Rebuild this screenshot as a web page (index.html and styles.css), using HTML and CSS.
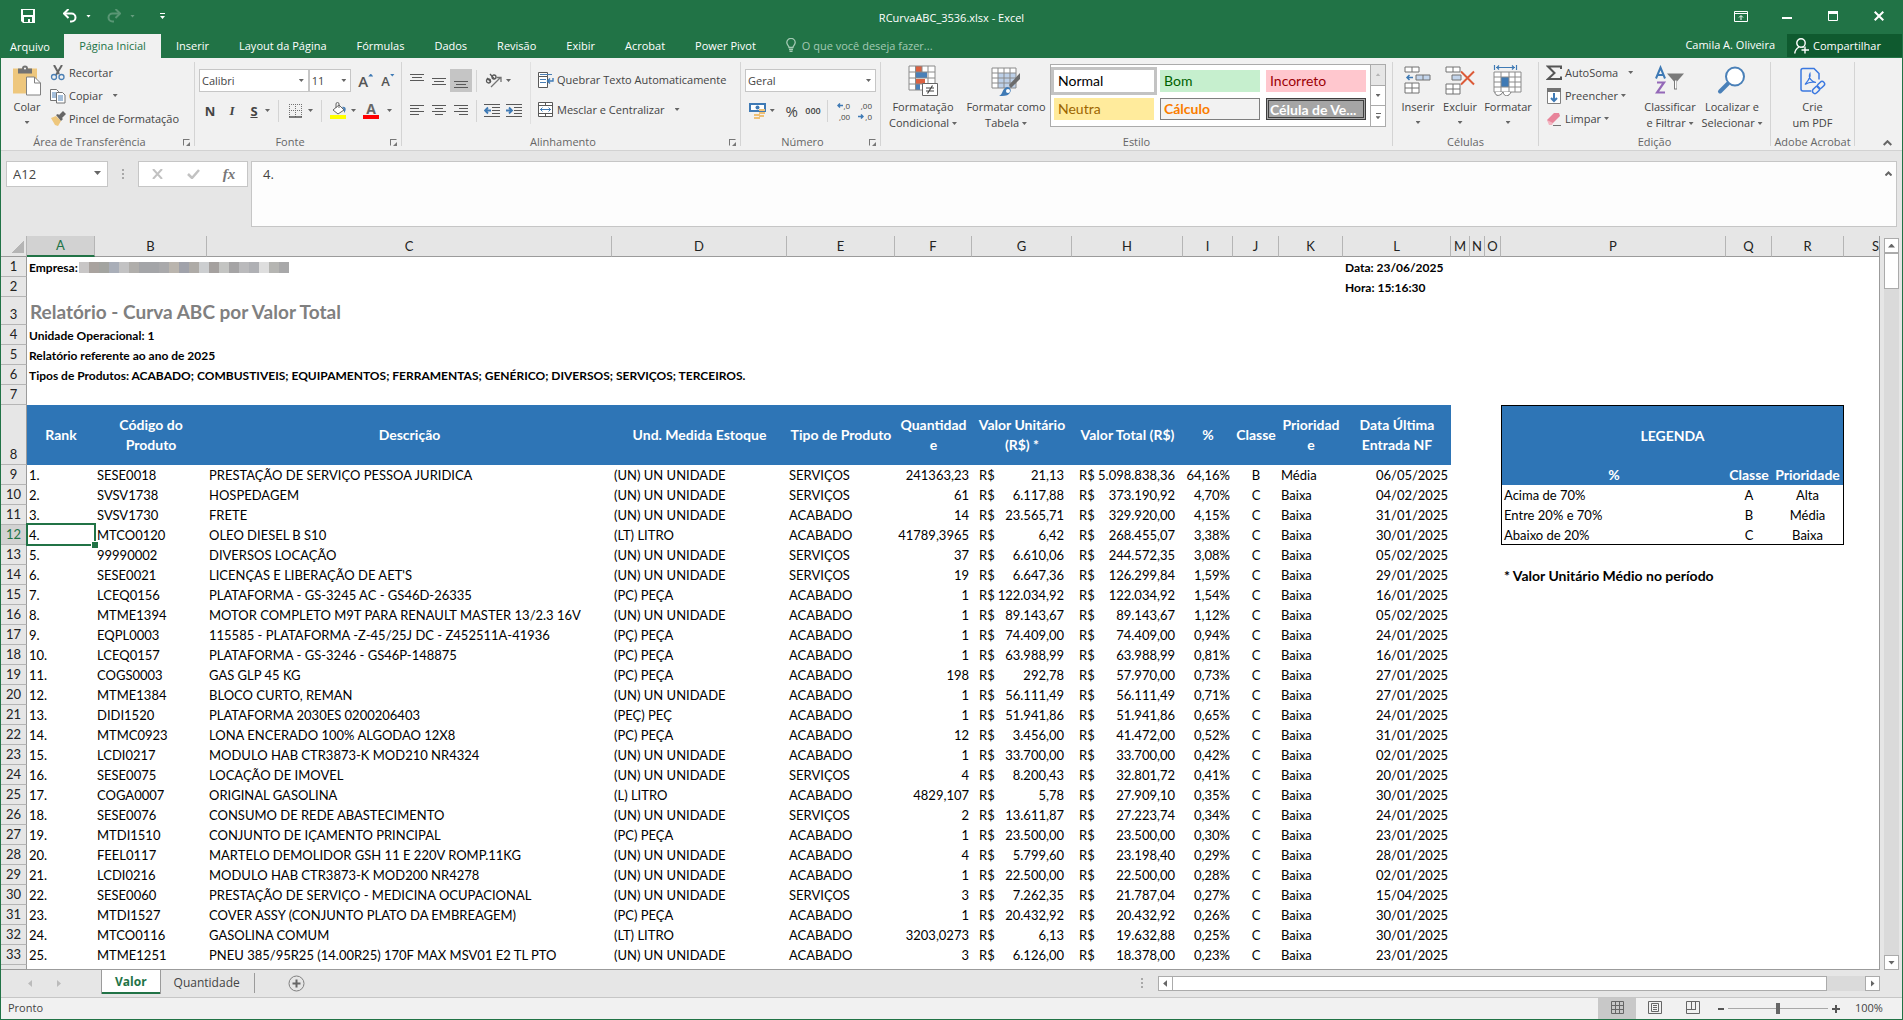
FILE: index.html
```html
<!DOCTYPE html>
<html lang="pt-BR">
<head>
    <meta charset="UTF-8">
    <meta name="viewport" content="width=device-width, initial-scale=1.0">
    <title>RCurvaABC_3536.xlsx - Excel</title>
    <link rel="stylesheet" href="styles.css">
</head>
<body>
    <header class="titlebar">
        <div class="quick">
            <button class="save" aria-label="Salvar"><svg width="14" height="14" viewBox="0 0 14 14"><path d="M0 0h14v14H2L0 12z" fill="#fff"/><path d="M2 1h10v5H2zM3 8h8v5H9v-3H7v3H3z" fill="#217346"/></svg></button>
            <button aria-label="Desfazer"><svg width="14" height="14" viewBox="0 0 14 14"><path d="M1 4.500h7.500a4 4 0 0 1 0 8H7" fill="none" stroke="#fff" stroke-width="2"/><path d="M5.500 0L1 4.500 5.500 9" fill="none" stroke="#fff" stroke-width="2"/></svg></button>
            <i class="caret light"></i>
            <button class="redo" aria-label="Refazer"><svg width="14" height="14" viewBox="0 0 14 14"><path d="M13 4.500H5.500a4 4 0 0 0 0 8H7" fill="none" stroke="#fff" stroke-width="2"/><path d="M8.500 0L13 4.500 8.500 9" fill="none" stroke="#fff" stroke-width="2"/></svg></button>
            <i class="caret light dim"></i>
            <button class="more" aria-label="Personalizar"><svg width="5" height="7" viewBox="0 0 5 7"><path d="M0 0h5v1H0zM0 3h5L2.500 6z" fill="#fff"/></svg></button>
        </div>
        <h1>RCurvaABC_3536.xlsx - Excel</h1>
        <div class="window-buttons">
            <button aria-label="Opções da faixa"><svg width="14" height="11" viewBox="0 0 14 11"><path d="M.5.5h13v10H.5zM1 2.500h12M7 9V5M5 6.500L7 4.500l2 2" fill="none" stroke="#fff"/></svg></button>
            <button aria-label="Minimizar"><svg width="10" height="10" viewBox="0 0 10 10"><path d="M0 6h10v2H0z" fill="#fff"/></svg></button>
            <button aria-label="Restaurar"><svg width="10" height="10" viewBox="0 0 10 10"><path d="M.5.5h9v9h-9z" fill="none" stroke="#fff"/><path d="M0 0h10v3H0z" fill="#fff"/></svg></button>
            <button aria-label="Fechar"><svg width="10" height="10" viewBox="0 0 10 10"><path d="M.7.7l8.600 8.600M9.300.7L.7 9.300" stroke="#fff" stroke-width="2"/></svg></button>
        </div>
    </header>

    <nav class="tabs">
        <button class="file">Arquivo</button>
        <button class="active">Página Inicial</button>
        <button>Inserir</button>
        <button>Layout da Página</button>
        <button>Fórmulas</button>
        <button>Dados</button>
        <button>Revisão</button>
        <button>Exibir</button>
        <button>Acrobat</button>
        <button>Power Pivot</button>
        <button class="tellme"><svg width="10" height="14" viewBox="0 0 10 14"><path d="M3 9.500C3 7.500.8 7 .8 4.600a4.200 4.200 0 0 1 8.400 0C9.200 7 7 7.500 7 9.500zM3 11.500h4M3.500 13.300h3" fill="none" stroke="#a3c9b3" stroke-width="1.300"/></svg>O que você deseja fazer...</button>
        <span class="user">Camila A. Oliveira</span>
        <button class="share"><svg width="15" height="16" viewBox="0 0 15 16"><circle cx="7" cy="5" r="4.200" fill="none" stroke="#fff" stroke-width="1.400"/><path d="M.8 15.500c0-3.500 2-5 4.200-6.500M8.500 9l1 .8M11 8.500v7M7.500 12H15" fill="none" stroke="#fff" stroke-width="1.400"/></svg>Compartilhar</button>
    </nav>

    <section class="ribbon">
        <div class="group clipboard">
            <div class="tools">
                <button class="big paste">
                    <svg width="30" height="30" viewBox="0 0 30 30"><path d="M1 3h24v25H1z" fill="#eec77d"/><path d="M6 3h4a3 3 0 0 1 6 0h4v5H6z" fill="#737373"/><circle cx="13" cy="3" r="1" fill="#fff"/><path d="M14.500 11.500h8l6 6v12h-14z" fill="#fff" stroke="#808080"/><path d="M22.500 11.500v6h6" fill="none" stroke="#808080"/></svg>
                    <span>Colar</span><i class="caret"></i>
                </button>
                <div class="stack">
                    <button class="small"><svg width="16" height="16" viewBox="0 0 16 16"><path d="M4 0l5 9M12 0L6 10" stroke="#666" stroke-width="2"/><circle cx="4" cy="12" r="2.500" fill="none" stroke="#4a7fb5" stroke-width="1.300"/><circle cx="11.500" cy="12" r="2.500" fill="none" stroke="#4a7fb5" stroke-width="1.300"/></svg>Recortar</button>
                    <button class="small"><svg width="16" height="16" viewBox="0 0 16 16"><path d="M.5 1.500h6l2 2v9h-8z" fill="#fff" stroke="#737373"/><path d="M2 5h4M2 7h4M2 9h4" stroke="#4a7fb5"/><path d="M6.500 4.500h6l2.500 2.500v8H6.500z" fill="#fff" stroke="#737373"/><path d="M8 8h5M8 10h5M8 12h5" stroke="#4a7fb5"/></svg>Copiar<i class="caret far"></i></button>
                    <button class="small"><svg width="16" height="16" viewBox="0 0 16 16"><path d="M1 7l5-2 5 5-3 5-3-1z" fill="#eec77d"/><path d="M6 4l2-1 5 5-2 2zM9 4l4-4 3 3-4 4z" fill="#666"/></svg>Pincel de Formatação</button>
                </div>
            </div>
            <div class="label">Área de Transferência<i class="launch"></i></div>
        </div>

        <div class="group font">
            <div class="tools rows">
                <div class="line">
                    <label class="combo family"><select aria-label="Fonte"><option>Calibri</option></select><i class="caret"></i></label>
                    <label class="combo size"><select aria-label="Tamanho"><option>11</option></select><i class="caret"></i></label>
                    <button class="grow" aria-label="Aumentar fonte">A<i class="tri up"></i></button>
                    <button class="grow shrink" aria-label="Diminuir fonte">A<i class="tri down"></i></button>
                </div>
                <div class="line">
                    <button class="glyph bold">N</button>
                    <button class="glyph italic">I</button>
                    <button class="glyph under">S</button>
                    <i class="caret"></i>
                    <span class="sep"></span>
                    <button class="tool" aria-label="Bordas"><svg width="14" height="14" viewBox="0 0 14 14"><path d="M.5 0v13M6.500 0v13M12.500 0v13M0 .5h13M0 6.500h13" stroke="#737373" stroke-dasharray="1 1" fill="none"/><path d="M0 13h13" stroke="#555" stroke-width="1.500"/></svg></button>
                    <i class="caret"></i>
                    <span class="sep"></span>
                    <button class="tool" aria-label="Preenchimento"><svg width="17" height="17" viewBox="0 0 17 17"><path d="M3 8l6-5 5 5-6 4z" fill="#fff" stroke="#666"/><path d="M6 6V2a1.500 1.500 0 0 1 3 0v4" fill="none" stroke="#666"/><path d="M12 5c4-1 5 3 2 6 0-3 0-4-2-6" fill="#4a7fb5"/><path d="M0 13h16v4H0z" fill="#ff0"/></svg></button>
                    <i class="caret"></i>
                    <button class="tool fontcolor" aria-label="Cor da fonte">A</button>
                    <i class="caret"></i>
                </div>
            </div>
            <div class="label">Fonte<i class="launch"></i></div>
        </div>

        <div class="group align">
            <div class="tools">
                <div class="rows">
                    <div class="line">
                        <button class="cell22" aria-label="Em cima"><svg width="14" height="14" viewBox="0 0 14 14"><path d="M0 .5h14M2 3.500h10M0 6.500h14" stroke="#595959"/></svg></button>
                        <button class="cell22" aria-label="No meio"><svg width="14" height="14" viewBox="0 0 14 14"><path d="M0 4.500h14M2 7.500h10M0 10.500h14" stroke="#595959"/></svg></button>
                        <button class="cell22 pressed" aria-label="Embaixo"><svg width="14" height="14" viewBox="0 0 14 14"><path d="M0 7.500h14M2 10.500h10M0 13.500h14" stroke="#595959"/></svg></button>
                        <span class="sep"></span>
                        <button class="orient" aria-label="Orientação"><svg width="17" height="15" viewBox="0 0 17 15"><g fill="none" stroke="#595959" stroke-width="1.300"><circle cx="3.500" cy="8" r="2"/><path d="M2 5l4 4M5 1l4.500 5"/><circle cx="9" cy="4" r="2"/></g><path d="M6 14l9-9M11.500 4.500H16V9" fill="none" stroke="#737373" stroke-width="1.300"/></svg></button>
                        <i class="caret"></i>
                    </div>
                    <div class="line">
                        <button class="cell22" aria-label="Esquerda"><svg width="14" height="11" viewBox="0 0 14 11"><path d="M0 .5h14M0 3.500h9M0 6.500h14M0 9.500h9" stroke="#595959"/></svg></button>
                        <button class="cell22" aria-label="Centro"><svg width="14" height="11" viewBox="0 0 14 11"><path d="M0 .5h14M3 3.500h8M0 6.500h14M3 9.500h8" stroke="#595959"/></svg></button>
                        <button class="cell22" aria-label="Direita"><svg width="14" height="11" viewBox="0 0 14 11"><path d="M0 .5h14M5 3.500h9M0 6.500h14M5 9.500h9" stroke="#595959"/></svg></button>
                        <span class="sep"></span>
                        <button class="cell22" aria-label="Diminuir recuo"><svg width="16" height="14" viewBox="0 0 16 14"><path d="M0 .5h16M8 3.500h8M8 6.500h8M8 9.500h8M0 12.500h16" stroke="#595959"/><path d="M7 6.500H1M4 3.500l-3 3 3 3" fill="none" stroke="#3f7ab5" stroke-width="1.800"/></svg></button>
                        <button class="cell22" aria-label="Aumentar recuo"><svg width="16" height="14" viewBox="0 0 16 14"><path d="M0 .5h16M8 3.500h8M8 6.500h8M8 9.500h8M0 12.500h16" stroke="#595959"/><path d="M0 6.500h6M3 3.500l3 3-3 3" fill="none" stroke="#3f7ab5" stroke-width="1.800"/></svg></button>
                    </div>
                </div>
                <div class="rows wraps">
                    <button class="small line"><svg width="16" height="16" viewBox="0 0 16 16"><path d="M.5.5h9v4h-9zM.5 4.500h9v11h-9z" fill="#fff" stroke="#595959"/><path d="M2 2.500h12M2 7.500h6M2 10.500h6" stroke="#4a7fb5"/><path d="M15 6v3h-5M12 6.500L9.500 9l2.500 2.500" fill="none" stroke="#3f7ab5" stroke-width="1.400"/></svg>Quebrar Texto Automaticamente</button>
                    <button class="small line"><svg width="16" height="15" viewBox="0 0 16 15"><path d="M.5.5h14v14H.5zM.5 3.500h14M.5 11.500h14M7.500 0v3M7.500 12v3" fill="#fff" stroke="#595959"/><path d="M2 7.500h11M4.500 5.500l-2 2 2 2M10.500 5.500l2 2-2 2" fill="none" stroke="#3f7ab5"/></svg>Mesclar e Centralizar<i class="caret far"></i></button>
                </div>
            </div>
            <div class="label">Alinhamento<i class="launch"></i></div>
        </div>

        <div class="group number">
            <div class="tools rows">
                <div class="line">
                    <label class="combo format"><select aria-label="Formato"><option>Geral</option></select><i class="caret"></i></label>
                </div>
                <div class="line">
                    <button class="tool" aria-label="Moeda"><svg width="17" height="17" viewBox="0 0 17 17"><path d="M1 2h15v7H1z" fill="#fff" stroke="#3f7ab5" stroke-width="2"/><circle cx="8.500" cy="5.500" r="2" fill="#3f7ab5"/><path d="M10 7h6v2h-6zM10 10h6v2h-6zM5 12h6v2H5zM5 15h6v2H5zM10 13h5v2h-5z" fill="#eec077"/></svg></button>
                    <i class="caret"></i>
                    <button class="glyph percent">%</button>
                    <button class="glyph thousand">000</button>
                    <span class="sep"></span>
                    <button class="decimals"><span><svg width="6" height="5" viewBox="0 0 6 5"><path d="M6 2.500H1M3 .5l-2 2 2 2" fill="none" stroke="#3f7ab5" stroke-width="1.500"/></svg>,0</span><span>,00</span></button>
                    <button class="decimals"><span>,00</span><span><svg width="6" height="5" viewBox="0 0 6 5"><path d="M0 2.500h5M3 .5l2 2-2 2" fill="none" stroke="#3f7ab5" stroke-width="1.500"/></svg>,0</span></button>
                </div>
            </div>
            <div class="label">Número<i class="launch"></i></div>
        </div>

        <div class="group styles">
            <div class="tools">
                <button class="big cond">
                    <svg width="30" height="31" viewBox="0 0 30 31"><path d="M1 1h26v24H1z" fill="#fff"/><path d="M8 1h6v6H8zM8 14h9v5H8z" fill="#dc6141"/><path d="M8 7h11v6H8zM8 19h4v6H8z" fill="#4a80b8"/><path d="M1 1h26v24H1zM1 7h26M1 13h26M1 19h26M7.500 1v24M14 1v6M20 1v24" fill="none" stroke="#8a8a8a"/><path d="M14.500 18.500h15v12h-15z" fill="#fff" stroke="#666"/><path d="M18 23h8M18 26h8M24.500 20.500l-5 8" stroke="#444" stroke-width="1.200"/></svg>
                    <span>Formatação<br>Condicional <i class="caret"></i></span>
                </button>
                <button class="big astable">
                    <svg width="30" height="31" viewBox="0 0 30 31"><path d="M1 3h24v20H1z" fill="#fff"/><path d="M7 8h18v15H7z" fill="#bdd0e8"/><path d="M1 3h24v20H1zM1 8h24M1 13h24M1 18h24M7 3v20M13 3v20M19 3v20" fill="none" stroke="#8a8a8a"/><path d="M29 8v6l-9 9-2-3z" fill="#6b6b6b"/><path d="M8 31c4-1 3-8 8-9 4 0 5 4 2 7-2 2-6 2-10 2" fill="#3f7ab5"/><circle cx="17" cy="26" r="2" fill="#fff"/></svg>
                    <span>Formatar como<br>Tabela <i class="caret"></i></span>
                </button>
                <div class="gallery">
                    <div class="swatches">
                        <button class="normal">Normal</button>
                        <button class="good">Bom</button>
                        <button class="bad">Incorreto</button>
                        <button class="neutral">Neutra</button>
                        <button class="calc">Cálculo</button>
                        <button class="check">Célula de Ve...</button>
                    </div>
                    <div class="spin">
                        <button class="off" aria-label="Acima"><i class="tri up"></i></button>
                        <button aria-label="Abaixo"><i class="caret"></i></button>
                        <button class="all" aria-label="Mais"><i class="bar"></i><i class="caret"></i></button>
                    </div>
                </div>
            </div>
            <div class="label">Estilo</div>
        </div>

        <div class="group cells">
            <div class="tools">
                <button class="big">
                    <svg width="28" height="30" viewBox="0 0 28 30"><path d="M1 1.500h14v5H1zM8 1.500v5M1 17.500h14v10H1zM8 17.500v10M1 22.500h14" fill="#fff" stroke="#737373"/><path d="M12 9.500h14v5H12zM19 9.500v5" fill="#c3d5ec" stroke="#737373"/><path d="M9 12H3M5.500 9.500L3 12l2.500 2.500" fill="none" stroke="#3f7ab5" stroke-width="1.500"/></svg>
                    <span>Inserir</span><i class="caret"></i>
                </button>
                <button class="big">
                    <svg width="30" height="30" viewBox="0 0 30 30"><path d="M1 1.500h14v5H1zM8 1.500v5M1 18.500h14v10H1zM8 18.500v10M1 23.500h14" fill="#fff" stroke="#737373"/><path d="M7 9.500h9v5H7z" fill="#c3d5ec" stroke="#737373"/><path d="M16 6l13 13M29 6L16 19" stroke="#dc5a38" stroke-width="2"/></svg>
                    <span>Excluir</span><i class="caret"></i>
                </button>
                <button class="big">
                    <svg width="30" height="31" viewBox="0 0 30 31"><path d="M1 7h27v20H1z" fill="#fff"/><path d="M8 12h8v10H8z" fill="#3f7ab5"/><path d="M1 7h27v20H1zM1 12h27M1 17h7M1 22h27M16 17h12M8 7v20M16 7v20M22 7v20" fill="none" stroke="#8a8a8a"/><path d="M2 27c0 5 6 4 8 0 1 5 6 5 8 0" fill="#fff" stroke="#737373"/><path d="M1.500 0v5M23.500 0v5M3 2.500h19M6 .5l-2 2 2 2M19 .5l2 2-2 2" fill="none" stroke="#3f7ab5" stroke-width="1.200"/></svg>
                    <span>Formatar</span><i class="caret"></i>
                </button>
            </div>
            <div class="label">Células</div>
        </div>

        <div class="group editing">
            <div class="tools">
                <div class="stack">
                    <button class="small"><svg width="16" height="16" viewBox="0 0 16 16"><path d="M15 4V1.500H2L8.500 8 2 14h13v-2.500" fill="none" stroke="#555" stroke-width="2"/></svg>AutoSoma<i class="caret far"></i></button>
                    <button class="small"><svg width="16" height="16" viewBox="0 0 16 16"><path d="M1.500 1.500h13v14h-13z" fill="#fff" stroke="#808080"/><path d="M1 0h14v4H1z" fill="#737373"/><path d="M8 5v8M5 10l3 3 3-3" fill="none" stroke="#3f7ab5" stroke-width="2"/></svg>Preencher<i class="caret"></i></button>
                    <button class="small"><svg width="16" height="16" viewBox="0 0 16 16"><path d="M1 9l7-7h5l1 3-7 7H3z" fill="#e8849a"/><path d="M1 9l6 3-1 2H3z" fill="#f3b5c1"/><path d="M7 14.500h8" stroke="#737373"/></svg>Limpar<i class="caret"></i></button>
                </div>
                <button class="big sort">
                    <svg width="30" height="30" viewBox="0 0 30 30"><path d="M1 13L5.500 2 10 13M2.500 9.500h6" fill="none" stroke="#3f7ab5" stroke-width="2"/><path d="M2 17h7L2 27h8" fill="none" stroke="#9468b8" stroke-width="2.200"/><path d="M12 8h17l-7 8v8h-3v-8z" fill="#7a7a7a"/><path d="M20 15h1.500v8H20z" fill="#fff"/></svg>
                    <span>Classificar<br>e Filtrar <i class="caret"></i></span>
                </button>
                <button class="big find">
                    <svg width="30" height="30" viewBox="0 0 30 30"><path d="M11 18l-8 8" stroke="#4a80b8" stroke-width="4" stroke-linecap="round"/><circle cx="18" cy="11" r="9" fill="#fff" stroke="#4a80b8" stroke-width="2"/></svg>
                    <span>Localizar e<br>Selecionar <i class="caret"></i></span>
                </button>
            </div>
            <div class="label">Edição</div>
        </div>

        <div class="group acrobat">
            <div class="tools">
                <button class="big">
                    <svg width="26" height="30" viewBox="0 0 26 30"><path d="M11 25.500H3a2 2 0 0 1-2-2V5a2 2 0 0 1 2-2h11l5 5v6" fill="none" stroke="#3b78e0" stroke-width="1.500"/><path d="M5 19c2-3 6-6 5-11-2 4 1 8 6 9-4-1-8 0-11 2" fill="none" stroke="#3b78e0" stroke-width="1.200"/><g fill="none" stroke="#3b78e0" stroke-width="1.500"><rect x="17" y="17" width="8" height="5" rx="2.500" transform="rotate(-45 21 19.500)"/><rect x="12" y="22" width="8" height="5" rx="2.500" transform="rotate(-45 16 24.500)"/></g></svg>
                    <span>Crie<br>um PDF</span>
                </button>
            </div>
            <div class="label">Adobe Acrobat</div>
        </div>
        <button class="collapse" aria-label="Recolher"><svg width="9" height="6" viewBox="0 0 9 6"><path d="M.7 5l3.800-3.800L8.300 5" fill="none" stroke="#666" stroke-width="2"/></svg></button>
    </section>

    <section class="formula">
        <label class="namebox"><input type="text" value="A12" aria-label="Caixa de nome"><i class="caret"></i></label>
        <span class="dots"></span>
        <div class="actions">
            <button aria-label="Cancelar"><svg width="11" height="10" viewBox="0 0 11 10"><path d="M1 0l9 10M10 0L1 10" stroke="#c2c2c2" stroke-width="2"/></svg></button>
            <button aria-label="Inserir"><svg width="13" height="10" viewBox="0 0 13 10"><path d="M1 5l4 4 7-8" fill="none" stroke="#c2c2c2" stroke-width="2.500"/></svg></button>
            <button class="fx">fx</button>
        </div>
        <div class="entry">
            <textarea aria-label="Barra de fórmulas">4.</textarea>
            <button aria-label="Recolher barra"><svg width="7" height="5" viewBox="0 0 7 5"><path d="M.5 4.500l3-3 3 3" fill="none" stroke="#666" stroke-width="2"/></svg></button>
        </div>
    </section>

    <main class="sheet">
        <div class="grid">
            <table>
                <colgroup id="cols"></colgroup>
                <thead><tr id="letters"></tr></thead>
                <tbody id="rows">
                    <tr><th>1</th><td colspan="11" class="info"><div class="company">Empresa:<span class="redacted"></span></div></td><td colspan="8" class="info">Data: 23/06/2025</td></tr>
                    <tr><th>2</th><td colspan="11"></td><td colspan="8" class="info">Hora: 15:16:30</td></tr>
                    <tr class="title-row"><th>3</th><td colspan="19" class="title">Relatório - Curva ABC por Valor Total</td></tr>
                    <tr><th>4</th><td colspan="19" class="info">Unidade Operacional: 1</td></tr>
                    <tr><th>5</th><td colspan="19" class="info">Relatório referente ao ano de 2025</td></tr>
                    <tr><th>6</th><td colspan="19" class="info">Tipos de Produtos: ACABADO; COMBUSTIVEIS; EQUIPAMENTOS; FERRAMENTAS; GENÉRICO; DIVERSOS; SERVIÇOS; TERCEIROS.</td></tr>
                    <tr><th>7</th><td colspan="19"></td></tr>
                    <tr class="head-row">
                        <th>8</th>
                        <td class="head">Rank</td>
                        <td class="head">Código do<br>Produto</td>
                        <td class="head">Descrição</td>
                        <td class="head">Und. Medida Estoque</td>
                        <td class="head">Tipo de Produto</td>
                        <td class="head">Quantidad<br>e</td>
                        <td class="head">Valor Unitário<br>(R$) *</td>
                        <td class="head">Valor Total (R$)</td>
                        <td class="head">%</td>
                        <td class="head">Classe</td>
                        <td class="head">Prioridad<br>e</td>
                        <td class="head">Data Última<br>Entrada NF</td>
                        <td colspan="3"></td>
                        <td colspan="3" class="head legend-title">LEGENDA</td>
                        <td></td>
                    </tr>
                </tbody>
            </table>
        </div>
        <div class="vscroll">
            <button aria-label="Rolar para cima"><i class="tri up"></i></button>
            <span class="thumb"></span>
            <span class="track"></span>
            <button aria-label="Rolar para baixo"><i class="tri down"></i></button>
        </div>
    </main>

    <div class="sheetbar">
        <div class="arrows"><i class="tri left"></i><i class="tri right"></i></div>
        <button class="sheettab current">Valor</button>
        <button class="sheettab">Quantidade</button>
        <button class="add" aria-label="Nova planilha"><svg width="17" height="17" viewBox="0 0 17 17"><circle cx="8.500" cy="8.500" r="7.500" fill="none" stroke="#808080"/><path d="M8.500 4.500v8M4.500 8.500h8" stroke="#666" stroke-width="2"/></svg></button>
        <span class="dots"></span>
        <div class="hscroll">
            <button aria-label="Rolar para a esquerda"><i class="tri left"></i></button>
            <span class="thumb"></span>
            <span class="track"></span>
            <button aria-label="Rolar para a direita"><i class="tri right"></i></button>
        </div>
    </div>

    <footer class="status">
        <span class="ready">Pronto</span>
        <button class="view on" aria-label="Normal"><svg width="13" height="13" viewBox="0 0 13 13"><path d="M.5.5h12v12H.5zM4.500 0v13M8.500 0v13M0 4.500h13M0 8.500h13" fill="none" stroke="#666"/></svg></button>
        <button class="view" aria-label="Layout da Página"><svg width="14" height="13" viewBox="0 0 14 13"><path d="M.5.5h13v12H.5zM3.500 2.500h7v8h-7zM5 4.500h4M5 6.500h4M5 8.500h4" fill="none" stroke="#666"/></svg></button>
        <button class="view" aria-label="Quebra de Página"><svg width="14" height="13" viewBox="0 0 14 13"><path d="M.5.5h13v12H.5zM5.500 0v8M9.500 0v8M0 8.500h10" fill="none" stroke="#666"/></svg></button>
        <button class="zoombtn minus" aria-label="Reduzir"></button>
        <input type="range" min="10" max="190" value="100" aria-label="Zoom">
        <button class="zoombtn plus" aria-label="Ampliar"></button>
        <span class="percent-label">100%</span>
    </footer>

    <script>
        const columns = [
            ['A', 68], ['B', 112], ['C', 405], ['D', 175], ['E', 108], ['F', 77], ['G', 100], ['H', 111], ['I', 50], ['J', 46],
            ['K', 64], ['L', 108], ['M', 19], ['N', 15], ['O', 16], ['P', 225], ['Q', 46], ['R', 72], ['S', 64]
        ];

        const un = '(UN) UN UNIDADE', pc = '(PC) PEÇA', lt = '(LT) LITRO';
        const sv = 'SERVIÇOS', ac = 'ACABADO';

        // codigo, descricao, unidade, tipo, quantidade, valor unitario, valor total, %, data
        const items = [
            ['SESE0018', 'PRESTAÇÃO DE SERVIÇO PESSOA JURIDICA', un, sv, '241363,23', '21,13', '5.098.838,36', '64,16%', '06/05/2025'],
            ['SVSV1738', 'HOSPEDAGEM', un, sv, '61', '6.117,88', '373.190,92', '4,70%', '04/02/2025'],
            ['SVSV1730', 'FRETE', un, ac, '14', '23.565,71', '329.920,00', '4,15%', '31/01/2025'],
            ['MTCO0120', 'OLEO DIESEL B S10', lt, ac, '41789,3965', '6,42', '268.455,07', '3,38%', '30/01/2025'],
            ['99990002', 'DIVERSOS LOCAÇÃO', un, sv, '37', '6.610,06', '244.572,35', '3,08%', '05/02/2025'],
            ['SESE0021', "LICENÇAS E LIBERAÇÃO DE AET'S", un, sv, '19', '6.647,36', '126.299,84', '1,59%', '29/01/2025'],
            ['LCEQ0156', 'PLATAFORMA - GS-3245 AC - GS46D-26335', pc, ac, '1', '122.034,92', '122.034,92', '1,54%', '16/01/2025'],
            ['MTME1394', 'MOTOR COMPLETO M9T PARA RENAULT MASTER 13/2.3 16V', un, ac, '1', '89.143,67', '89.143,67', '1,12%', '05/02/2025'],
            ['EQPL0003', '115585 - PLATAFORMA -Z-45/25J DC - Z452511A-41936', '(PÇ) PEÇA', ac, '1', '74.409,00', '74.409,00', '0,94%', '24/01/2025'],
            ['LCEQ0157', 'PLATAFORMA - GS-3246 - GS46P-148875', pc, ac, '1', '63.988,99', '63.988,99', '0,81%', '16/01/2025'],
            ['COGS0003', 'GAS GLP 45 KG', pc, ac, '198', '292,78', '57.970,00', '0,73%', '27/01/2025'],
            ['MTME1384', 'BLOCO CURTO, REMAN', un, ac, '1', '56.111,49', '56.111,49', '0,71%', '27/01/2025'],
            ['DIDI1520', 'PLATAFORMA 2030ES 0200206403', '(PEÇ) PEÇ', ac, '1', '51.941,86', '51.941,86', '0,65%', '24/01/2025'],
            ['MTMC0923', 'LONA ENCERADO 100% ALGODAO 12X8', pc, ac, '12', '3.456,00', '41.472,00', '0,52%', '31/01/2025'],
            ['LCDI0217', 'MODULO HAB CTR3873-K MOD210 NR4324', un, ac, '1', '33.700,00', '33.700,00', '0,42%', '02/01/2025'],
            ['SESE0075', 'LOCAÇÃO DE IMOVEL', un, sv, '4', '8.200,43', '32.801,72', '0,41%', '20/01/2025'],
            ['COGA0007', 'ORIGINAL GASOLINA', '(L) LITRO', ac, '4829,107', '5,78', '27.909,10', '0,35%', '30/01/2025'],
            ['SESE0076', 'CONSUMO DE REDE ABASTECIMENTO', un, sv, '2', '13.611,87', '27.223,74', '0,34%', '24/01/2025'],
            ['MTDI1510', 'CONJUNTO DE IÇAMENTO PRINCIPAL', pc, ac, '1', '23.500,00', '23.500,00', '0,30%', '23/01/2025'],
            ['FEEL0117', 'MARTELO DEMOLIDOR GSH 11 E 220V ROMP.11KG', un, ac, '4', '5.799,60', '23.198,40', '0,29%', '28/01/2025'],
            ['LCDI0216', 'MODULO HAB CTR3873-K MOD200 NR4278', un, ac, '1', '22.500,00', '22.500,00', '0,28%', '02/01/2025'],
            ['SESE0060', 'PRESTAÇÃO DE SERVIÇO - MEDICINA OCUPACIONAL', un, sv, '3', '7.262,35', '21.787,04', '0,27%', '15/04/2025'],
            ['MTDI1527', 'COVER ASSY (CONJUNTO PLATO DA EMBREAGEM)', pc, ac, '1', '20.432,92', '20.432,92', '0,26%', '30/01/2025'],
            ['MTCO0116', 'GASOLINA COMUM', lt, ac, '3203,0273', '6,13', '19.632,88', '0,25%', '30/01/2025'],
            ['MTME1251', 'PNEU 385/95R25 (14.00R25) 170F MAX MSV01 E2 TL PTO', un, ac, '3', '6.126,00', '18.378,00', '0,23%', '23/01/2025']
        ];

        // celulas a direita da tabela, por linha da planilha
        const side = {
            9: '<td class="head lg-left">%</td><td class="head">Classe</td><td class="head lg-right">Prioridade</td><td></td>',
            10: '<td class="lg-left">Acima de 70%</td><td class="mid">A</td><td class="mid lg-right">Alta</td><td></td>',
            11: '<td class="lg-left">Entre 20% e 70%</td><td class="mid">B</td><td class="mid lg-right">Média</td><td></td>',
            12: '<td class="lg-left lg-end">Abaixo de 20%</td><td class="mid lg-end">C</td><td class="mid lg-right lg-end">Baixa</td><td></td>',
            14: '<td colspan="4" class="note">* Valor Unitário Médio no período</td>'
        };

        document.getElementById('cols').innerHTML = '<col class="col-num">' +
            columns.map(c => `<col style="width:${c[1]}px">`).join('');
        document.getElementById('letters').innerHTML = '<th class="corner"></th>' +
            columns.map(c => `<th${c[0] === 'A' ? ' class="picked"' : ''}>${c[0]}</th>`).join('');

        let html = '';
        items.forEach((it, i) => {
            const row = i + 9;
            const picked = row === 12;
            html += `<tr><th${picked ? ' class="picked"' : ''}>${row}</th>
                <td${picked ? ' class="cursor"' : ''}>${i + 1}.</td>
                <td>${it[0]}</td><td>${it[1]}</td><td>${it[2]}</td><td>${it[3]}</td>
                <td class="num">${it[4]}</td>
                <td class="money"><span>R$</span>${it[5]}</td>
                <td class="money"><span>R$</span>${it[6]}</td>
                <td class="num">${it[7]}</td>
                <td class="mid">${i === 0 ? 'B' : 'C'}</td>
                <td>${i === 0 ? 'Média' : 'Baixa'}</td>
                <td class="num">${it[8]}</td>
                <td colspan="3"></td>${side[row] || '<td colspan="4"></td>'}</tr>`;
        });
        html += '<tr><th></th><td colspan="19"></td></tr>';
        document.getElementById('rows').insertAdjacentHTML('beforeend', html);
    </script>
</body>
</html>
```
FILE: styles.css
```css
:root {
    --green: #217346;
    --ribbon: #f1f1f1;
    --chrome: #e6e6e6;
    --line: #c6c6c6;
    --sheet-line: #9b9b9b;
    --blue: #2e75b6;
    --ui: "Open Sans", "Noto Sans", sans-serif;
    --cell: Lato, "Open Sans", sans-serif;
}

* {
    box-sizing: border-box;
}

body {
    margin: 0;
    height: 100vh;
    display: flex;
    flex-direction: column;
    overflow: hidden;
    border: 1px solid var(--green);
    border-top: 0;
    background: var(--chrome);
    font-family: var(--ui);
    font-size: 11px;
    color: #444;
}

button {
    margin: 0;
    padding: 0;
    border: 0;
    background: none;
    font: inherit;
    color: inherit;
    white-space: nowrap;
}

svg {
    display: block;
    flex: none;
}

.caret {
    display: inline-block;
    flex: none;
    width: 5px;
    height: 3px;
    background: #666;
    clip-path: polygon(0 0, 100% 0, 50% 100%);
}

.caret.light {
    background: #fff;
}

.caret.dim {
    opacity: 0.3;
}

.tri {
    display: block;
    width: 7px;
    height: 4px;
    background: #666;
}

.tri.up {
    clip-path: polygon(50% 0, 100% 100%, 0 100%);
}

.tri.down {
    clip-path: polygon(0 0, 100% 0, 50% 100%);
}

.tri.left {
    width: 4px;
    height: 7px;
    clip-path: polygon(100% 0, 100% 100%, 0 50%);
}

.tri.right {
    width: 4px;
    height: 7px;
    clip-path: polygon(0 0, 100% 50%, 0 100%);
}

/* title bar */
.titlebar {
    display: grid;
    grid-template-columns: 1fr auto 1fr;
    height: 34px;
    flex: none;
    background: var(--green);
    color: #fff;
}

.titlebar h1 {
    margin: 0;
    padding-top: 2px;
    font-size: 11px;
    font-weight: normal;
    line-height: 32px;
}

.quick {
    display: flex;
    align-items: center;
    gap: 9px;
    padding: 0 20px 2px;
}

.quick .save {
    margin-right: 19px;
}

.quick .redo {
    margin-left: 7px;
    opacity: 0.25;
}

.quick .more {
    margin-left: 16px;
}

.window-buttons {
    display: flex;
    justify-content: flex-end;
}

.window-buttons button {
    width: 46px;
    height: 32px;
    display: flex;
    align-items: center;
    justify-content: center;
}

/* ribbon tabs */
.tabs {
    display: flex;
    height: 24px;
    flex: none;
    background: var(--green);
    color: #fff;
}

.tabs button {
    padding: 0 15px 2px;
}

.tabs .file {
    width: 63px;
    padding: 0 5px 0 0;
}

.tabs .active {
    width: 97px;
    padding: 0 0 2px;
    background: var(--ribbon);
    color: var(--green);
}

.tabs .tellme {
    display: flex;
    align-items: center;
    gap: 6px;
    color: #a3c9b3;
}

.tabs .user {
    margin-left: auto;
    padding-right: 12px;
    line-height: 22px;
}

.tabs .share {
    display: flex;
    align-items: center;
    gap: 4px;
    width: 115px;
    height: 23px;
    padding: 0 0 0 7px;
    background: #0f5a2f;
}

/* ribbon */
.ribbon {
    display: flex;
    height: 93px;
    flex: none;
    padding: 4px 0;
    background: var(--ribbon);
    border-bottom: 1px solid #d2d2d2;
}

.group {
    display: flex;
    flex-direction: column;
    flex: none;
    border-right: 1px solid #d4d4d4;
}

.tools {
    display: flex;
    height: 72px;
}

.label {
    position: relative;
    height: 12px;
    line-height: 16px;
    text-align: center;
    color: #666;
}

.launch {
    position: absolute;
    right: 4px;
    top: 5px;
    width: 7px;
    height: 7px;
    border: 1px solid #777;
    border-right-color: transparent;
    border-bottom-color: transparent;
}

.launch::after {
    content: "";
    position: absolute;
    right: -1px;
    bottom: -1px;
    width: 4px;
    height: 4px;
    background: #777;
    clip-path: polygon(100% 0, 100% 100%, 0 100%);
}

.clipboard { width: 194px; }
.font { width: 207px; }
.align { width: 339px; }
.number { width: 140px; }
.styles { width: 512px; }
.cells { width: 146px; }
.editing { width: 232px; }
.acrobat { width: 84px; }

.clipboard .label,
.font .label,
.align .label,
.number .label {
    padding-right: 16px;
}

.big {
    display: flex;
    flex-direction: column;
    align-items: center;
    padding-top: 3px;
    line-height: 16px;
    text-align: center;
}

.big svg {
    height: 31px;
    margin-bottom: 3px;
}

.big > .caret {
    margin-top: 6px;
}

.big span .caret {
    margin-bottom: 2px;
}

.paste {
    width: 49px;
    padding-left: 3px;
}

.stack {
    display: flex;
    flex-direction: column;
}

.small {
    display: flex;
    align-items: center;
    gap: 3px;
    height: 23px;
    padding-bottom: 2px;
}

.small .far {
    margin-left: 7px;
}

.rows {
    display: flex;
    flex-direction: column;
    gap: 7px;
    padding: 7px 4px 0;
}

.line {
    display: flex;
    align-items: center;
    height: 23px;
}

.sep {
    width: 1px;
    height: 22px;
    margin: 0 4px;
    background: #d4d4d4;
}

.combo {
    position: relative;
    height: 23px;
}

.combo select {
    appearance: none;
    width: 100%;
    height: 23px;
    padding: 0 2px;
    border: 1px solid var(--line);
    border-radius: 0;
    background: #fff;
    font: 11px var(--ui);
    color: #444;
}

.combo .caret {
    position: absolute;
    right: 5px;
    top: 10px;
}

.combo.family { width: 111px; }
.combo.size { width: 43px; }
.combo.format { width: 131px; }

.grow {
    display: flex;
    width: 23px;
    padding-left: 7px;
    font-size: 15px;
    font-weight: 600;
    line-height: 20px;
    color: #555;
}

.grow.shrink {
    font-size: 13px;
}

.grow .tri {
    width: 5px;
    height: 3px;
    margin-top: 3px;
    background: #3f7ab5;
}

.glyph {
    width: 22px;
    font-size: 13px;
}

.bold {
    font-weight: bold;
}

.italic {
    font-family: "Liberation Serif", serif;
    font-style: italic;
    font-weight: bold;
}

.under {
    font-weight: bold;
    text-decoration: underline;
}

.tool {
    display: flex;
    justify-content: center;
    width: 25px;
}

.font .sep {
    margin: 0 4px 0 8px;
}

.fontcolor {
    width: 16px;
    height: 17px;
    margin: 0 8px 0 7px;
    border-bottom: 4px solid #f00;
    font-size: 14px;
    font-weight: bold;
    line-height: 14px;
    color: #666;
}

.cell22 {
    display: flex;
    align-items: center;
    justify-content: center;
    width: 22px;
    height: 23px;
}

.pressed {
    background: #c5c5c5;
}

.orient {
    padding: 0 4px;
}

.wraps {
    height: 62px;
    margin-left: 1px;
    padding-left: 7px;
    border-left: 1px solid #e0e0e0;
}

.percent {
    margin-left: 6px;
    font-size: 15px;
}

.thousand {
    width: 21px;
    font-size: 9px;
    font-weight: 600;
}

.decimals {
    width: 22px;
    display: flex;
    flex-direction: column;
    align-items: flex-end;
    padding-right: 4px;
    font-size: 8px;
    line-height: 11px;
}

.decimals span {
    display: flex;
    align-items: center;
    gap: 1px;
}

.cond {
    width: 84px;
}

.astable {
    width: 82px;
}

.gallery {
    display: flex;
    width: 336px;
    height: 63px;
    margin: 2px 0 0 3px;
    border: 1px solid #ababab;
    background: #fff;
}

.swatches {
    flex: 1;
    display: grid;
    grid-template-columns: repeat(3, 100px);
    gap: 6px;
    padding: 5px 3px;
    grid-auto-rows: 22px;
}

.swatches button {
    padding: 0 4px 2px;
    font-family: var(--cell);
    font-size: 14px;
    text-align: left;
}

.normal {
    color: #000;
    outline: 3px solid #c3c3c3;
}

.good { background: #c6efce; color: #006100; }
.bad { background: #ffc7ce; color: #9c0006; }
.neutral { background: #ffeb9c; color: #9c6500; }

.swatches .calc {
    border: 1px solid #7f7f7f;
    background: #f2f2f2;
    color: #fa7d00;
    font-weight: bold;
    padding: 0 3px 2px;
}

.swatches .check {
    border: 3px double #3f3f3f;
    background: #a5a5a5;
    color: #fff;
    font-weight: bold;
    padding: 0 1px;
    line-height: 15px;
}

.spin {
    display: flex;
    flex-direction: column;
    width: 15px;
    border-left: 1px solid #ababab;
}

.spin button {
    flex: 1;
    display: flex;
    flex-direction: column;
    align-items: center;
    justify-content: center;
    gap: 2px;
}

.spin button + button {
    border-top: 1px solid #ababab;
}

.spin .off {
    background: #e6e6e6;
}

.spin .tri {
    width: 5px;
    height: 3px;
    background: #b5b5b5;
}

.spin .bar {
    width: 5px;
    height: 1px;
    background: #666;
}

.cells .tools {
    padding-left: 4px;
}

.cells .big {
    width: 42px;
}

.cells .big:last-child {
    width: 54px;
}

.editing .stack {
    width: 100px;
    padding-left: 7px;
}

.sort {
    width: 62px;
}

.find {
    width: 62px;
}

.acrobat .big {
    width: 100%;
}

.collapse {
    align-self: flex-end;
    margin: 0 10px 0 auto;
}

/* formula bar */
.formula {
    display: flex;
    flex: none;
    padding: 10px 5px 9px;
    color: #444;
}

.namebox {
    position: relative;
    width: 102px;
    height: 26px;
}

.namebox input {
    width: 100%;
    height: 26px;
    padding: 0 6px;
    border: 1px solid var(--line);
    background: #fff;
    font: 13px var(--ui);
    color: #444;
}

.namebox .caret {
    position: absolute;
    right: 7px;
    top: 10px;
    width: 7px;
    height: 4px;
}

.dots {
    width: 2px;
    height: 10px;
    background: repeating-linear-gradient(#a8a8a8 0 2px, transparent 2px 4px);
}

.formula .dots {
    margin: 8px 14px;
}

.actions {
    display: flex;
    width: 110px;
    height: 26px;
    border: 1px solid var(--line);
    background: #fff;
}

.actions button {
    flex: 1;
    display: flex;
    align-items: center;
    justify-content: center;
}

.fx {
    font: italic bold 15px "Liberation Serif", serif;
    color: #777;
}

.entry {
    flex: 1;
    display: flex;
    align-items: flex-start;
    height: 66px;
    margin-left: 3px;
    border: 1px solid var(--line);
    background: #fdfdfd;
}

.entry textarea {
    flex: 1;
    height: 64px;
    padding: 3px 11px;
    border: 0;
    resize: none;
    background: none;
    font: 13px/18px var(--ui);
    color: #444;
}

.entry button {
    padding: 9px 4px;
}

/* sheet */
.sheet {
    flex: 1;
    min-height: 0;
    display: flex;
}

.grid {
    flex: 1;
    min-width: 0;
    overflow: hidden;
    border-bottom: 1px solid var(--sheet-line);
    border-right: 1px solid var(--sheet-line);
    background: #fff;
}

table {
    table-layout: fixed;
    width: 0;
    border-collapse: separate;
    border-spacing: 0;
    font-family: var(--cell);
    font-size: 13px;
    line-height: 19px;
    color: #000;
}

.col-num {
    width: 26px;
}

td {
    height: 20px;
    padding: 0 2px;
    white-space: nowrap;
}

th {
    height: 20px;
    padding: 0;
    background: var(--chrome);
    border-right: 1px solid var(--sheet-line);
    border-bottom: 1px solid #b5b5b5;
    font-weight: normal;
    color: #222;
    vertical-align: bottom;
}

thead th {
    height: 21px;
    border-right-color: #b5b5b5;
    border-bottom-color: var(--sheet-line);
    line-height: 20px;
}

th.picked {
    background: #d2d2d2;
    color: var(--green);
}

thead th.picked {
    border-bottom: 2px solid var(--green);
    line-height: 19px;
}

th.corner {
    background: linear-gradient(135deg, transparent 50%, #b5b5b5 50%) 11px 5px / 12px 12px no-repeat, var(--chrome);
}

.info {
    font-size: 12px;
    font-weight: bold;
}

.company {
    display: flex;
    height: 19px;
}

.redacted {
    width: 210px;
    height: 11px;
    margin: 4px 0 0 1px;
    background: linear-gradient(90deg,
        #c8c6c6 0 10px, #a9a39f 10px 20px, #a3a4a0 20px 30px, #a9aeb8 30px 40px, #c2c2c3 40px 50px,
        #b0aeab 50px 60px, #a4a5a8 60px 80px, #a9a9ab 80px 90px, #bab5ae 90px 100px, #a0a2aa 100px 110px,
        #aeaba7 110px 120px, #ccced0 120px 130px, #a5a19f 130px 140px, #c3c4c2 140px 150px, #a5a4a5 150px 160px,
        #bababc 160px 170px, #afb0b4 170px 180px, #dedede 180px 190px, #b5b5b2 190px 200px, #a8a8a9 200px);
}

.title-row td {
    height: 28px;
}

.title {
    padding-left: 3px;
    font-size: 19px;
    font-weight: bold;
    color: #808080;
}

.head-row td {
    height: 60px;
}

.head {
    padding: 0;
    background: var(--blue);
    color: #fff;
    font-size: 14px;
    font-weight: bold;
    line-height: 20px;
    text-align: center;
}

.num {
    padding-right: 3px;
    text-align: right;
}

.mid {
    text-align: center;
}

.money {
    padding: 0 8px 0 7px;
    text-align: right;
}

.money span {
    float: left;
}

.legend-title {
    border: 1px solid #000;
    border-bottom: 0;
}

.lg-left {
    border-left: 1px solid #000;
}

.lg-right {
    border-right: 1px solid #000;
}

.lg-end {
    border-bottom: 1px solid #000;
    line-height: 18px;
}

.note {
    padding-left: 3px;
    font-size: 14px;
    font-weight: bold;
}

.cursor {
    position: relative;
}

.cursor::before {
    content: "";
    position: absolute;
    inset: -2px -1px -1px -1px;
    border: 2px solid var(--green);
}

.cursor::after {
    content: "";
    position: absolute;
    right: -3px;
    bottom: -3px;
    width: 6px;
    height: 6px;
    border: solid #fff;
    border-width: 1px 0 0 1px;
    background: var(--green);
}

.vscroll {
    display: flex;
    flex-direction: column;
    width: 15px;
    margin: 2px 3px 0 4px;
}

.vscroll button,
.hscroll button {
    display: flex;
    align-items: center;
    justify-content: center;
    width: 15px;
    height: 15px;
    border: 1px solid #ababab;
    background: #fff;
}

.vscroll .thumb {
    height: 36px;
    border: 1px solid #ababab;
    background: #fff;
}

.track {
    flex: 1;
    background: #dadada;
}

/* sheet tabs */
.sheetbar {
    display: flex;
    flex: none;
    height: 28px;
    border-bottom: 1px solid var(--line);
    font-size: 12px;
}

.arrows {
    display: flex;
    gap: 25px;
    width: 100px;
    padding: 10px 0 0 27px;
}

.arrows .tri {
    background: #bbb;
}

.sheettab {
    height: 20px;
    margin-top: 3px;
    padding: 0 14px 0 13px;
    border-right: 1px solid var(--sheet-line);
    line-height: 18px;
}

.sheettab.current {
    height: 24px;
    margin-top: 0;
    padding: 0 13px;
    background: #fff;
    border: 1px solid var(--sheet-line);
    border-width: 0 1px;
    box-shadow: inset 0 -2px var(--green);
    font-weight: bold;
    line-height: 24px;
    color: var(--green);
}

.add {
    width: 17px;
    height: 17px;
    margin: 5px 33px;
}

.sheetbar .dots {
    margin: 8px 15px 0 auto;
}

.hscroll {
    display: flex;
    width: 38%;
    height: 15px;
    margin: 6px 22px 0 0;
}

.hscroll .thumb {
    width: 654px;
    border: 1px solid #ababab;
    border-left: 0;
    background: #fff;
}

/* status bar */
.status {
    display: flex;
    align-items: center;
    flex: none;
    height: 21px;
    padding-right: 20px;
    background: var(--ribbon);
}

.ready {
    margin-right: auto;
    padding: 0 0 2px 7px;
}

.view {
    display: flex;
    align-items: center;
    justify-content: center;
    width: 38px;
    height: 21px;
    padding-bottom: 2px;
}

.view.on {
    background: #c8c8c8;
}

.zoombtn {
    width: 8px;
    height: 8px;
}

.minus {
    margin: 0 3px 0 5px;
    background: linear-gradient(#555, #555) center / 6px 2px no-repeat;
}

.plus {
    margin: 0 15px 0 4px;
    background: linear-gradient(#555, #555) center / 8px 2px no-repeat, linear-gradient(#555, #555) center / 2px 8px no-repeat;
}

input[type="range"] {
    appearance: none;
    width: 100px;
    height: 12px;
    margin: 0;
    background: linear-gradient(#a8a8a8, #a8a8a8) center / 100% 1px no-repeat;
}

input[type="range"]::-webkit-slider-thumb {
    appearance: none;
    width: 4px;
    height: 11px;
    background: #666;
}

.percent-label {
    width: 27px;
    padding-bottom: 2px;
    text-align: right;
}
```
